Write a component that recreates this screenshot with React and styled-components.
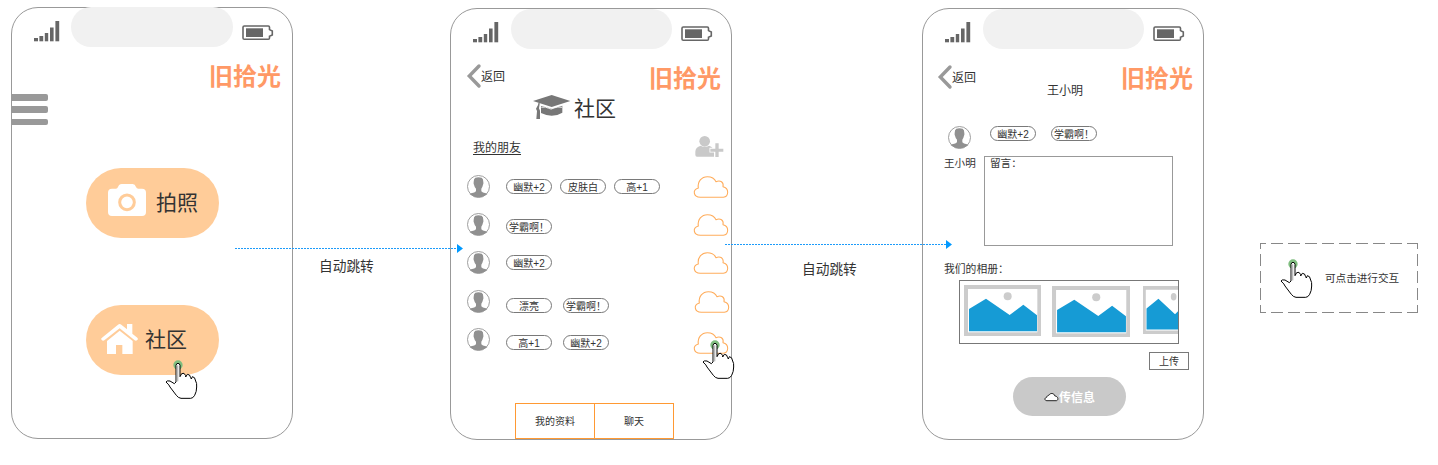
import React from "react";
import styled, { createGlobalStyle } from "styled-components";

const Global = createGlobalStyle`
  * { box-sizing: border-box; }
  body {
    margin: 0;
    background: #fff;
    color: #333;
    font-family: "Liberation Sans", "Noto Sans CJK SC", sans-serif;
  }
  svg { display: block; flex: none; overflow: visible; }
`;

const Board = styled.main`
  display: flex;
  align-items: flex-start;
  width: 1438px;
  height: 465px;
  padding: 7px 0 0 11px;
  overflow: hidden;
`;

const Phone = styled.section`
  flex: none;
  display: flex;
  flex-direction: column;
  width: 282px;
  height: 432px;
  margin-top: ${(p) => p.$drop || 0}px;
  border: 1px solid #999;
  border-radius: 27px;
`;

const StatusBar = styled.div`
  display: flex;
  flex: none;
  height: 40px;
  margin-top: ${(p) => p.$lift || 0}px;
  padding-left: 22px;
`;

const Notch = styled.div`
  width: ${(p) => 162 - p.$inset}px;
  height: 40px;
  margin: 0 9px 0 ${(p) => 11 + p.$inset}px;
  border-radius: 20px;
  background: #f1f1f1;
`;

const TopRow = styled.div`
  display: flex;
  flex: none;
  justify-content: space-between;
  height: 46px;
  padding: 0 ${(p) => p.$right || 10}px 0 ${(p) => p.$left || 0}px;
`;

const Brand = styled.h1`
  margin: 12px 0 0 auto;
  font-size: 24px;
  line-height: 36px;
  font-weight: 700;
  color: #ff9966;
  white-space: nowrap;
`;

const Back = styled.div`
  display: flex;
  align-items: center;
  height: 24px;
  margin-top: ${(p) => p.$top}px;
  font-size: 12px;
  line-height: 24px;
`;

const BackText = styled.span`
  padding-top: 2px;
`;

const MenuIcon = styled.div`
  display: flex;
  flex-direction: column;
  justify-content: space-between;
  flex: none;
  width: 37px;
  height: 31px;
  margin: 1px 0 0 -1px;
`;

const MenuBar = styled.span`
  height: 6.5px;
  border-radius: 0 2px 2px 0;
  background: #999;
`;

const BigButton = styled.button`
  display: flex;
  flex: none;
  align-items: center;
  width: 133px;
  height: 70px;
  margin: ${(p) => p.$top}px 0 0 74px;
  padding: 0 0 0 ${(p) => p.$pad}px;
  gap: ${(p) => p.$gap}px;
  border: 0;
  border-radius: 35px;
  background: #ffcc99;
  color: #333;
  font: inherit;
  font-size: 21px;
  line-height: 30px;
`;

const Lift = styled.span`
  display: flex;
  margin-top: ${(p) => p.$y}px;
`;

const PageTitle = styled.h2`
  display: flex;
  align-items: center;
  flex: none;
  height: 30px;
  margin: -3px 0 0 82px;
  gap: 4px;
  font-size: 21px;
  font-weight: 400;
  line-height: 30px;
`;

const TitleText = styled.span`
  padding-top: 3px;
`;

const FriendsHead = styled.div`
  display: flex;
  flex: none;
  justify-content: space-between;
  align-items: center;
  height: 24px;
  margin-top: 12px;
  padding: 0 7px 0 22px;
  font-size: 12px;
`;

const FriendsLink = styled.a`
  text-decoration: underline;
  text-underline-offset: 2px;
`;

const FriendList = styled.div`
  display: flex;
  flex-direction: column;
  flex: none;
  margin-top: 17px;
`;

const FriendRow = styled.div`
  display: flex;
  align-items: flex-start;
  height: 38.2px;
  padding: 0 3px 0 16px;
`;

const Chips = styled.div`
  display: flex;
  flex: 1;
  gap: ${(p) => p.$gap}px;
  padding: ${(p) => p.$top}px 0 0 ${(p) => p.$left}px;
`;

const Chip = styled.span`
  display: flex;
  justify-content: center;
  align-items: center;
  width: 46px;
  height: 15px;
  border: 1px solid #797979;
  border-radius: 8px;
  font-size: 10px;
  line-height: 13px;
  padding-top: 2px;
  white-space: nowrap;
`;

const CloudSlot = styled.span`
  display: flex;
  margin: ${(p) => p.$top}px ${(p) => p.$right}px 0 0;
`;

const Tabs = styled.nav`
  display: flex;
  flex: none;
  width: 159px;
  height: 36px;
  margin: auto 0 0 64px;
  border: 1px solid #ff9933;
`;

const Tab = styled.a`
  flex: 1;
  text-align: center;
  font-size: 10px;
  line-height: 35px;
  & + & { border-left: 1px solid #ff9933; }
`;

const ContactName = styled.div`
  flex: none;
  height: 18px;
  margin: -13px 0 0 124px;
  font-size: 12px;
  line-height: 18px;
`;

const ContactRow = styled.div`
  display: flex;
  flex: none;
  height: 30px;
  margin-top: 26px;
  padding-left: 25px;
`;

const MessageRow = styled.div`
  display: flex;
  flex: none;
  padding-left: 21px;
  font-size: 10.6px;
  line-height: 14px;
`;

const MessageName = styled.span`
  width: 40px;
`;

const MessageBox = styled.div`
  width: 189px;
  height: 90px;
  padding-left: 5px;
  border: 1px solid #999;
  line-height: 13px;
`;

const AlbumTitle = styled.div`
  flex: none;
  height: 18px;
  margin: 15px 0 0 21px;
  font-size: 10.8px;
  line-height: 16px;
`;

const Album = styled.div`
  display: flex;
  flex: none;
  width: 220px;
  height: 64px;
  margin: 1px 0 0 36px;
  padding: 4px 0 0 4px;
  border: 1px solid #777;
  overflow: hidden;
`;

const PhotoSlot = styled.span`
  margin: ${(p) => p.$top}px 0 0 ${(p) => p.$left}px;
`;

const Upload = styled.button`
  flex: none;
  width: 40px;
  height: 18px;
  margin: 8px 0 0 226px;
  padding: 1px 0 0;
  border: 1px solid #797979;
  background: #fff;
  color: #333;
  font: inherit;
  font-size: 10px;
  line-height: 16px;
`;

const Send = styled.button`
  display: flex;
  flex: none;
  align-items: center;
  justify-content: center;
  width: 113px;
  height: 39px;
  margin: 7px 0 0 90px;
  padding: 0;
  border: 0;
  border-radius: 20px;
  background: #c9c9c9;
  color: #fff;
  font: inherit;
  font-size: 12px;
  font-weight: 700;
`;

const Transition = styled.div`
  position: relative;
  flex: none;
  width: ${(p) => p.$width}px;
  padding: ${(p) => p.$top}px 0 0 ${(p) => p.$left}px;
  font-size: 13.7px;
  line-height: 20px;
  white-space: nowrap;
`;

const ArrowLayer = styled.div`
  position: absolute;
  z-index: 2;
  left: ${(p) => p.$x}px;
  top: ${(p) => p.$y}px;
`;

const PointerLayer = styled.div`
  position: absolute;
  z-index: 3;
  left: ${(p) => p.$x}px;
  top: ${(p) => p.$y}px;
`;

const Anchor = styled.span`
  position: relative;
  display: flex;
`;

const Legend = styled.aside`
  display: flex;
  align-items: center;
  flex: none;
  width: 158px;
  height: 70px;
  margin: 236px 0 0 56px;
  padding: 2px 0 0 20px;
  font-size: 10.6px;
  line-height: 16px;
  background:
    repeating-linear-gradient(90deg, #888 0 6px, #fff 6px 11px, #888 11px 17px) 0 0 / 17px 1px repeat-x,
    repeating-linear-gradient(90deg, #888 0 6px, #fff 6px 11px, #888 11px 17px) 0 100% / 17px 1px repeat-x,
    repeating-linear-gradient(180deg, #888 0 6px, #fff 6px 11px, #888 11px 17px) 0 0 / 1px 17px repeat-y,
    repeating-linear-gradient(180deg, #888 0 6px, #fff 6px 11px, #888 11px 17px) 100% 0 / 1px 17px repeat-y;
`;

const LegendText = styled.span`
  margin: -2px 0 0 12px;
`;

const Signal = () => (
  <svg width="26" height="21" viewBox="0 0 26 21" fill="#666">
    <rect x="0" y="17" width="4" height="3.3" />
    <rect x="5.4" y="15" width="3.8" height="5.3" />
    <rect x="10.8" y="12" width="3.4" height="8.3" />
    <rect x="16" y="6.5" width="3.6" height="13.8" />
    <rect x="21.4" y="0" width="3.8" height="20.3" />
  </svg>
);

const Battery = () => (
  <svg width="32" height="16" viewBox="0 0 32 16">
    <path
      d="M2.3 1H26.3Q27.5 1 27.5 2.2V4.6L30.3 6V10L27.5 11.2V13Q27.5 14.3 26.3 14.3H2.3Q1 14.3 1 13V2.3Q1 1 2.3 1Z"
      fill="none"
      stroke="#666"
      strokeWidth="1.6"
    />
    <rect x="4" y="3.3" width="17" height="8.7" fill="#666" />
  </svg>
);

const Status = ({ lift, sink = 0, inset = 1 }) => (
  <StatusBar $lift={lift}>
    <Lift $y={13 + sink}><Signal /></Lift>
    <Notch $inset={inset} />
    <Lift $y={17 + sink}><Battery /></Lift>
  </StatusBar>
);

const Chevron = () => (
  <svg width="14" height="24" viewBox="0 0 14 24">
    <path d="M12 2 2.3 12 12 22" fill="none" stroke="#999" strokeWidth="3.4" strokeLinecap="round" />
  </svg>
);

const Camera = () => (
  <svg width="38" height="32" viewBox="114 87 114 96" fill="#fff">
    <path d="M126 101H138Q142 101 144 96Q147 87 155 87H188Q195 87 198 96Q200 101 205 101H216Q228 101 228 113V171Q228 183 216 183H126Q114 183 114 171V113Q114 101 126 101Z" />
    <circle cx="171" cy="142" r="22" fill="none" stroke="#ffcc99" strokeWidth="9" />
  </svg>
);

const House = () => (
  <svg width="37" height="30" viewBox="93 507 111 90" fill="#fff">
    <path d="M144 509Q149 505 154 509L171 523V507H187V536L202 548Q206 552 202 555Q198 559 194 556L149 520L103 556Q99 559 95 555Q91 551 96 548Z" />
    <path d="M149 527L188 558V597H157V570H138V597H111V558Z" />
  </svg>
);

const GradCap = () => (
  <svg width="37" height="24" viewBox="264 282 111 72" fill="#777">
    <path d="M264 300 320 282 376 300 320 318Z" />
    <path d="M288 315Q304 319 320 323Q337 319 352 314V335Q338 344 320 344Q304 344 288 336Z" />
    <path d="M289 319Q302 316 311 322Q318 327 327 321Q337 316 351 319" fill="none" stroke="#fff" strokeWidth="2.5" />
    <path d="M284 303Q279 305 279 312L273 323 276 330 274 354H285V329L282 322 284 309Z" />
  </svg>
);

const AddUser = () => (
  <svg width="29" height="21" viewBox="750 408 85 63" fill="#c9c9c9">
    <circle cx="778" cy="424" r="16" />
    <path d="M766 437Q778 445 791 437Q806 442 806 457V470H755Q750 470 750 464V455Q750 442 766 437Z" />
    <path d="M810 430H820V446H834V455H820V471H810V455H795V446H810Z" stroke="#fff" strokeWidth="5" paintOrder="stroke" />
  </svg>
);

const Avatar = () => (
  <svg width="23" height="23" viewBox="66 31 69 69">
    <circle cx="100.5" cy="65.5" r="33" fill="#fff" stroke="#909090" strokeWidth="2.6" />
    <path
      d="M91 39Q100 37 110 39Q115 42 115 52Q116 57 114 60Q112 69 109 72V80Q112 84 123 86L127 89Q114 98 100 98Q87 98 74 89L78 86Q90 84 93 80V72Q89 69 87 60Q85 57 86 52Q86 42 91 39Z"
      fill="#909090"
    />
  </svg>
);

const Cloud = () => (
  <svg width="34" height="22" viewBox="747 33 102 66">
    <path
      d="M766 97C744 96 742 74 760 69C757 50 770 35 787 35C800 35 809 41 813 50C826 44 837 52 834 65C853 69 852 95 835 97Z"
      fill="#fff"
      stroke="#ffad5c"
      strokeWidth="3.2"
      strokeLinejoin="round"
    />
  </svg>
);

const SmallCloud = () => (
  <svg width="15" height="10" viewBox="0 0 15 10">
    <path
      d="M3 8.7C.4 8.7.2 5.8 2.8 5.2C2.8 4 4 3.4 5 3.2C6 .7 10.2.9 10.8 3.9C14.8 4.6 14.5 8.6 12.2 8.7Z"
      fill="#fff"
      stroke="#222"
      strokeWidth="1"
    />
  </svg>
);

const Hand = () => (
  <svg width="33" height="40" viewBox="90 87 99 120">
    <circle cx="129" cy="102" r="14" fill="#7fbd7f" />
    <path
      d="M123 153V103Q124 97 129 97Q134 97 135 103V137L140 128Q148 123 152 134V138L157 130Q165 129 167 140L169 144L172 137Q180 137 182 150Q186 156 185 168Q185 182 179 193Q174 202 167 202H138Q130 201 124 193L105 168Q104 163 93 153Q95 148 105 150L118 158Z"
      fill="#fff"
      stroke="#000"
      strokeWidth="3"
      strokeLinejoin="round"
    />
    <path d="M125.5 151V103H130V151Z" fill="#bbb" />
  </svg>
);

const Photo = ({ width, height }) => (
  <svg width={width} height={height} viewBox="102 90 231 153" preserveAspectRatio="none">
    <rect x="102" y="90" width="231" height="153" fill="#ccc" />
    <rect x="114" y="102" width="208" height="130" fill="#fff" />
    <circle cx="233" cy="124" r="12" fill="#ccc" />
    <path d="M117 162 168 131 239 180 280 149 321 181V229H117Z" fill="#169bd5" />
  </svg>
);

const Arrow = ({ length }) => (
  <svg width={length} height="10" viewBox={`0 0 ${length} 10`}>
    <path d={`M0 4.5H${length - 6}`} stroke="#1c9bfa" strokeWidth="1" strokeDasharray="2 1" />
    <path d={`M${length - 6} 0 ${length} 4.5 ${length - 6} 9Z`} fill="#0099ff" />
  </svg>
);

const friends = [
  { tags: ["幽默+2", "皮肤白", "高+1"], gap: 8, top: 4, cloud: 1, shift: 0 },
  { tags: ["学霸啊！"], gap: 8, top: 5.7, cloud: 0.7, shift: 0 },
  { tags: ["幽默+2"], gap: 8, top: 3.6, cloud: 0.6, shift: 0 },
  { tags: ["漂亮", "学霸啊！"], gap: 11, top: 8, cloud: 1.2, shift: -1 },
  { tags: ["高+1", "幽默+2"], gap: 11, top: 7.2, cloud: 4.2, shift: 0, pointer: true },
];

export default function App() {
  return (
    <>
      <Global />
      <Board>
        <Phone>
          <Status lift={-1} sink={1} inset={0} />
          <TopRow $right={11}>
            <Brand>旧拾光</Brand>
          </TopRow>
          <MenuIcon>
            <MenuBar />
            <MenuBar />
            <MenuBar />
          </MenuIcon>
          <BigButton $top={43} $pad={22} $gap={10}>
            <Lift $y={-6}><Camera /></Lift>
            <span>拍照</span>
          </BigButton>
          <BigButton $top={67} $pad={15} $gap={7}>
            <Lift $y={-2}>
              <Anchor>
                <House />
                <PointerLayer $x={64} $y={36}><Hand /></PointerLayer>
              </Anchor>
            </Lift>
            <span>社区</span>
          </BigButton>
        </Phone>

        <Transition $width={157} $top={250} $left={26}>
          <ArrowLayer $x={-58} $y={237}><Arrow length={228} /></ArrowLayer>
          自动跳转
        </Transition>

        <Phone $drop={1}>
          <Status />
          <TopRow $left={16}>
            <Back $top={15}><Chevron /><BackText>返回</BackText></Back>
            <Brand>旧拾光</Brand>
          </TopRow>
          <PageTitle>
            <Lift $y={-1}><GradCap /></Lift>
            <TitleText>社区</TitleText>
          </PageTitle>
          <FriendsHead>
            <FriendsLink>我的朋友</FriendsLink>
            <AddUser />
          </FriendsHead>
          <FriendList>
            {friends.map((f, i) => (
              <FriendRow key={i}>
                <Avatar />
                <Chips $gap={f.gap} $top={f.top} $left={16}>
                  {f.tags.map((t) => <Chip key={t}>{t}</Chip>)}
                </Chips>
                <CloudSlot $top={f.cloud} $right={f.shift}>
                  <Anchor>
                    <Cloud />
                    {f.pointer && <PointerLayer $x={8} $y={8}><Hand /></PointerLayer>}
                  </Anchor>
                </CloudSlot>
              </FriendRow>
            ))}
          </FriendList>
          <Tabs>
            <Tab>我的资料</Tab>
            <Tab>聊天</Tab>
          </Tabs>
        </Phone>

        <Transition $width={190} $top={253} $left={70}>
          <ArrowLayer $x={-7} $y={233}><Arrow length={227} /></ArrowLayer>
          自动跳转
        </Transition>

        <Phone $drop={1}>
          <Status />
          <TopRow $left={15}>
            <Back $top={16}><Chevron /><BackText>返回</BackText></Back>
            <Brand>旧拾光</Brand>
          </TopRow>
          <ContactName>王小明</ContactName>
          <ContactRow>
            <Avatar />
            <Chips $gap={15} $top={0} $left={19}>
              <Chip>幽默+2</Chip>
              <Chip>学霸啊！</Chip>
            </Chips>
          </ContactRow>
          <MessageRow>
            <MessageName>王小明</MessageName>
            <MessageBox>留言：</MessageBox>
          </MessageRow>
          <AlbumTitle>我们的相册：</AlbumTitle>
          <Album>
            <PhotoSlot $top={0} $left={0}><Photo width={77} height={51} /></PhotoSlot>
            <PhotoSlot $top={1} $left={11}><Photo width={78} height={51} /></PhotoSlot>
            <PhotoSlot $top={1} $left={13}><Photo width={54} height={48} /></PhotoSlot>
          </Album>
          <Upload>上传</Upload>
          <Send><SmallCloud />传信息</Send>
        </Phone>

        <Legend>
          <Hand />
          <LegendText>可点击进行交互</LegendText>
        </Legend>
      </Board>
    </>
  );
}
